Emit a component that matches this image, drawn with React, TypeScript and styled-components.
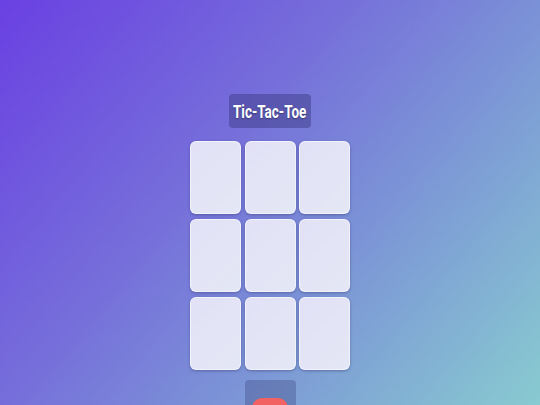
import React from 'react';
import styled, { createGlobalStyle } from 'styled-components';

const GlobalStyle = createGlobalStyle`
  html, body {
    margin: 0;
    padding: 0;
  }
  body {
    font-family: Roboto, "Liberation Sans", sans-serif;
    background: linear-gradient(130deg, #6a40e2 0%, #7670da 40%, #7c96d6 65%, #88cbd0 100%);
    min-height: 405px;
    overflow: hidden;
  }
`;

const Page = styled.div`
  display: flex;
  flex-direction: column;
  align-items: center;
  padding-top: 94px;
  height: 405px;
  box-sizing: border-box;
  overflow: hidden;

  & > * {
    flex-shrink: 0;
  }
`;

const Title = styled.h1`
  margin: 0;
  width: 82px;
  height: 34px;
  display: flex;
  align-items: center;
  justify-content: center;
  background: rgba(50, 50, 120, 0.42);
  border-radius: 4px;
  color: #fff;
  font-size: 19px;
  font-weight: 700;
  white-space: nowrap;
  text-shadow: 0 1px 2px rgba(0, 0, 0, 0.35);
`;

// the capture is squeezed sideways, so the heading glyphs are narrower than normal
const TitleText = styled.span`
  display: inline-block;
  transform: scaleX(0.71);
`;

const Board = styled.div`
  margin-top: 13px;
  display: grid;
  grid-template-columns: repeat(3, 51px);
  grid-template-rows: repeat(3, 73px);
  column-gap: 3.5px;
  row-gap: 5px;
`;

const Cell = styled.button`
  padding: 0;
  border: 1px solid rgba(255, 255, 255, 0.55);
  border-radius: 6px;
  background: linear-gradient(135deg, #e2e1f6 0%, #e4e7f5 100%);
  box-shadow: 0 1px 3px rgba(40, 40, 90, 0.4);
  cursor: pointer;
`;

const Controls = styled.div`
  margin-top: 10px;
  width: 51px;
  height: 40px;
  display: flex;
  justify-content: center;
  padding-top: 18px;
  box-sizing: border-box;
  background: rgba(60, 70, 130, 0.35);
  border-radius: 4px;
`;

const ResetButton = styled.button`
  width: 36px;
  height: 24px;
  border: none;
  border-radius: 10px;
  background: #f26262;
  cursor: pointer;
`;

export default function App() {
  const cells = Array.from({ length: 9 });
  return (
    <>
      <GlobalStyle />
      <Page>
        <Title>
          <TitleText>Tic-Tac-Toe</TitleText>
        </Title>
        <Board>
          {cells.map((_, i) => (
            <Cell key={i} aria-label={`cell ${i + 1}`} />
          ))}
        </Board>
        <Controls>
          <ResetButton aria-label="reset" />
        </Controls>
      </Page>
    </>
  );
}
